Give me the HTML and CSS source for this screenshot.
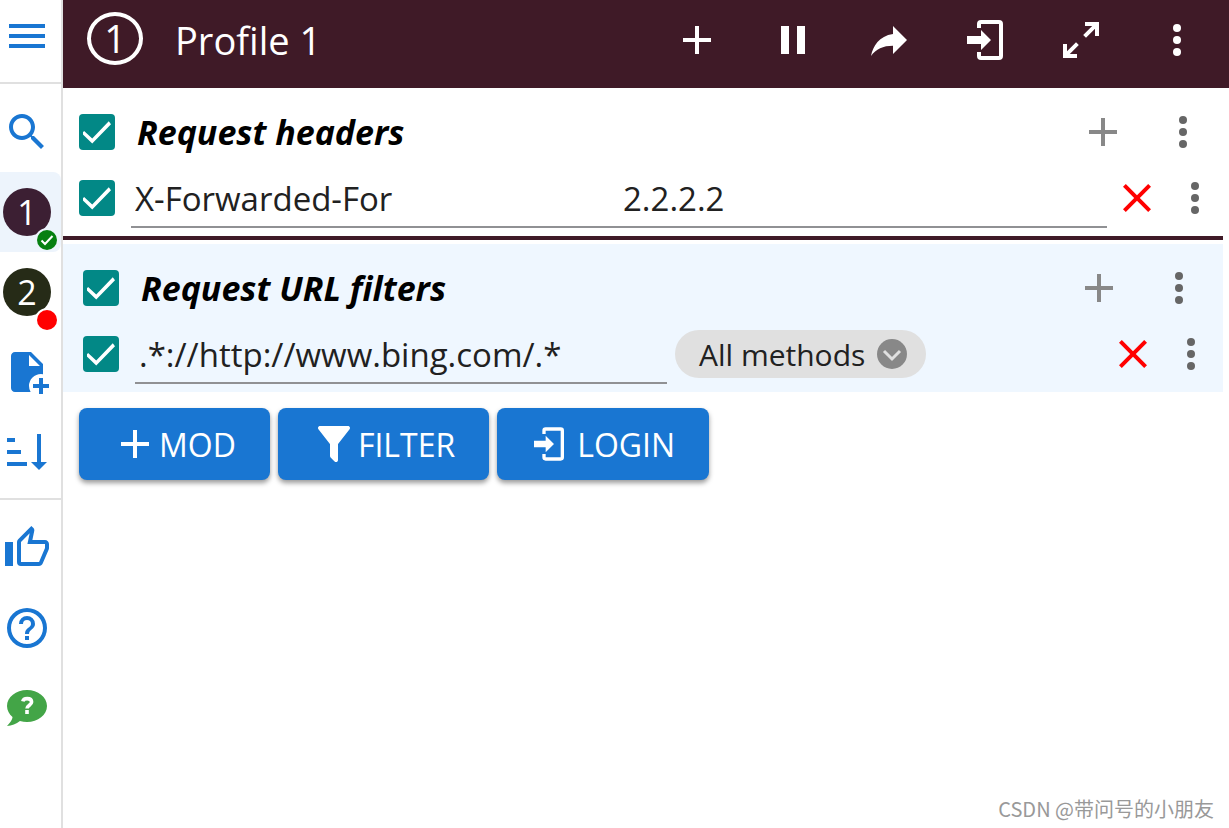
FILE: index.html
```html
<!DOCTYPE html>
<html lang="en">
<head>
<meta charset="utf-8">
<title>Profile 1</title>
<link rel="stylesheet" href="styles.css">
</head>
<body>
<svg class="sprite" aria-hidden="true">
  <symbol id="plus" viewBox="0 0 24 24"><path d="M19 13h-6v6h-2v-6H5v-2h6V5h2v6h6z"/></symbol>
  <symbol id="dots" viewBox="0 0 24 24"><circle cx="12" cy="6" r="2"/><circle cx="12" cy="12" r="2"/><circle cx="12" cy="18" r="2"/></symbol>
  <symbol id="close" viewBox="0 0 24 24"><path d="M19 6.41 17.59 5 12 10.59 6.41 5 5 6.41 10.59 12 5 17.59 6.41 19 12 13.41 17.59 19 19 17.59 13.41 12z"/></symbol>
  <symbol id="login" viewBox="0 0 24 24"><path d="M10 17V14H3V10H10V7L15 12L10 17M10 2H19A2 2 0 0 1 21 4V20A2 2 0 0 1 19 22H10A2 2 0 0 1 8 20V18H10V20H19V4H10V6H8V4A2 2 0 0 1 10 2Z"/></symbol>
</svg>
<div class="app">
  <nav class="sidebar">
    <div class="group group-top">
      <button class="item" aria-label="Menu"><svg class="icon" viewBox="0 0 24 24"><path d="M3 6h18v2H3zM3 11h18v2H3zM3 16h18v2H3z"/></svg></button>
    </div>
    <div class="group">
      <button class="item" aria-label="Search"><svg class="icon" viewBox="0 0 24 24"><path d="M15.5 14h-.79l-.28-.27C15.41 12.59 16 11.11 16 9.5 16 5.91 13.09 3 9.5 3S3 5.91 3 9.5 5.91 16 9.5 16c1.61 0 3.09-.59 4.23-1.57l.27.28v.79l5 4.99L20.49 19l-4.99-5zm-6 0C7.01 14 5 11.99 5 9.5S7.01 5 9.5 5 14 7.01 14 9.5 11.99 14 9.5 14z"/></svg></button>
      <button class="item selected"><span class="avatar plum">1<span class="badge on"><svg viewBox="0 0 20 20"><path d="M4.500 10.500l3.500 3.500 7.500-8" fill="none" stroke="#fff" stroke-width="2"/></svg></span></span></button>
      <button class="item"><span class="avatar olive">2<span class="badge off"></span></span></button>
      <button class="item" aria-label="Add profile"><svg class="icon" viewBox="0 0 24 24"><path fill-rule="evenodd" d="M6 2C4.89 2 4 2.9 4 4V20C4 21.1 4.89 22 6 22H13.81A6 6 0 0 1 13 19A6 6 0 0 1 19 13A6 6 0 0 1 20 13.09V8L14 2H6M13 3.500L18.500 9H13V3.500M18 15V18H15V20H18V23H20V20H23V18H20V15H18Z"/></svg></button>
      <button class="item" aria-label="Sort profiles"><svg class="icon" viewBox="0 0 24 24"><path d="M19 3V17H22L18 21L14 17H17V3M2 17H12V19H2M6 5V7H2V5M2 11H9V13H2V11Z"/></svg></button>
    </div>
    <div class="group group-last">
      <button class="item" aria-label="Like"><svg class="icon" viewBox="0 0 24 24"><path d="M5 9V21H1V9H5M9 21A2 2 0 0 1 7 19V9C7 8.450 7.220 7.950 7.590 7.590L14.170 1L15.230 2.060C15.500 2.330 15.670 2.700 15.670 3.110L15.640 3.430L14.690 8H21C22.110 8 23 8.900 23 10V12C23 12.260 22.950 12.500 22.860 12.730L19.840 19.780C19.540 20.500 18.830 21 18 21H9M9 19H18.030L21 12V10H12.210L13.340 4.680L9 9.030V19Z"/></svg></button>
      <button class="item" aria-label="Help"><svg class="icon" viewBox="0 0 24 24"><path d="M11 18H13V16H11V18M12 2A10 10 0 0 0 2 12A10 10 0 0 0 12 22A10 10 0 0 0 22 12A10 10 0 0 0 12 2M12 20C7.590 20 4 16.410 4 12S7.590 4 12 4S20 7.590 20 12S16.410 20 12 20M12 6A4 4 0 0 0 8 10H10A2 2 0 0 1 12 8A2 2 0 0 1 14 10C14 12 11 11.750 11 15H13C13 12.750 16 12.500 16 10A4 4 0 0 0 12 6Z"/></svg></button>
      <button class="item" aria-label="Support"><svg class="icon green" viewBox="0 0 24 24"><path d="M12 3C6.500 3 2 6.580 2 11C2.050 13.150 3.060 15.170 4.750 16.500C4.750 17.100 4.330 18.670 2 21C4.370 20.890 6.640 20 8.470 18.500C9.610 18.830 10.810 19 12 19C17.500 19 22 15.420 22 11S17.500 3 12 3Z"/><path d="M9.900 8.700C10.100 7.700 11 7.300 12.100 7.300C13.500 7.300 14.300 8 14.300 9C14.300 10.600 12 10.600 12 12.300M12 13v2" fill="none" stroke="#fff" stroke-width="1.800"/></svg></button>
    </div>
  </nav>

  <div class="main">
    <header class="topbar">
      <span class="ring">1</span>
      <h1 class="title">Profile 1</h1>
      <button class="tool" aria-label="Add"><svg class="icon"><use href="#plus"/></svg></button>
      <button class="tool" aria-label="Pause"><svg class="icon" viewBox="0 0 24 24"><path d="M6 19h4V5H6zM14 5v14h4V5z"/></svg></button>
      <button class="tool" aria-label="Share"><svg class="icon" viewBox="0 0 24 24"><path d="M21 12L14 5V9C7 10 4 15 3 20C5.500 16.500 9 14.900 14 14.900V19L21 12Z"/></svg></button>
      <button class="tool" aria-label="Log in"><svg class="icon"><use href="#login"/></svg></button>
      <button class="tool" aria-label="Expand"><svg class="icon" viewBox="0 0 24 24"><path d="M10 21V19H6.410L10.910 14.500L9.500 13.090L5 17.590V14H3V21H10M14.500 10.910L19 6.410V10H21V3H14V5H17.590L13.090 9.500L14.500 10.910Z"/></svg></button>
      <button class="tool" aria-label="More"><svg class="icon"><use href="#dots"/></svg></button>
    </header>

    <section class="panel headers">
      <div class="row head">
        <input class="check" type="checkbox" id="rh" checked>
        <label class="heading" for="rh">Request headers</label>
        <button class="act add" aria-label="Add header"><svg class="icon"><use href="#plus"/></svg></button>
        <button class="act more" aria-label="Header options"><svg class="icon"><use href="#dots"/></svg></button>
      </div>
      <div class="row">
        <input class="check" type="checkbox" aria-label="Enable header" checked>
        <div class="fields">
          <input class="field" type="text" aria-label="Name" value="X-Forwarded-For">
          <input class="field" type="text" aria-label="Value" value="2.2.2.2">
        </div>
        <button class="act remove" aria-label="Remove header"><svg class="icon"><use href="#close"/></svg></button>
        <button class="act more" aria-label="Header row options"><svg class="icon"><use href="#dots"/></svg></button>
      </div>
    </section>

    <section class="panel filters">
      <div class="row head">
        <input class="check" type="checkbox" id="rf" checked>
        <label class="heading" for="rf">Request URL filters</label>
        <button class="act add" aria-label="Add filter"><svg class="icon"><use href="#plus"/></svg></button>
        <button class="act more" aria-label="Filter options"><svg class="icon"><use href="#dots"/></svg></button>
      </div>
      <div class="row">
        <input class="check" type="checkbox" aria-label="Enable filter" checked>
        <div class="fields">
          <input class="field" type="text" aria-label="URL pattern" value=".*://http://www.bing.com/.*">
        </div>
        <div class="chip-area">
          <button class="chip">All methods<svg class="chip-icon" viewBox="0 0 30 30"><circle cx="15" cy="15" r="15"/><path d="M7 12l8 8 8-8" fill="none" stroke="#e0e0e0" stroke-width="3"/></svg></button>
        </div>
        <button class="act remove" aria-label="Remove filter"><svg class="icon"><use href="#close"/></svg></button>
        <button class="act more" aria-label="Filter row options"><svg class="icon"><use href="#dots"/></svg></button>
      </div>
    </section>

    <div class="actions">
      <button class="btn"><svg class="icon"><use href="#plus"/></svg>MOD</button>
      <button class="btn"><svg class="icon" viewBox="0 0 24 24"><path d="M14 12V19.880C14.040 20.180 13.940 20.500 13.710 20.710C13.320 21.100 12.690 21.100 12.300 20.710L10.290 18.700C10.060 18.470 9.960 18.160 10 17.870V12H9.970L4.210 4.620C3.870 4.190 3.950 3.560 4.380 3.220C4.570 3.080 4.780 3 5 3H19C19.220 3 19.430 3.080 19.620 3.220C20.050 3.560 20.130 4.190 19.790 4.620L14.030 12H14Z"/></svg>FILTER</button>
      <button class="btn"><svg class="icon small"><use href="#login"/></svg>LOGIN</button>
    </div>
    <footer class="credit">CSDN @带问号的小朋友</footer>
  </div>
</div>
</body>
</html>
```

FILE: styles.css
```css
* { box-sizing: border-box; }
body {
  margin: 0;
  background: #fff;
  color: #212121;
  font-family: "Open Sans", "Noto Sans", "Noto Sans CJK SC", sans-serif;
}
button, input { font: inherit; color: inherit; }
button {
  display: flex;
  align-items: center;
  padding: 0;
  border: 0;
  background: none;
  cursor: pointer;
}
.sprite { display: none; }
.icon { width: 48px; height: 48px; flex: none; fill: currentColor; }
.app { display: flex; min-height: 100vh; }

.sidebar {
  flex: none;
  width: 63px;
  border-right: 2px solid #e0e0e0;
  color: #1976d2;
}
.group { padding: 8px 0 6px; border-bottom: 2px solid #e0e0e0; }
.group-top { padding: 0 0 10px; }
.group-top .item { height: 72px; }
.group-last { border-bottom: 0; }
.item { width: 100%; height: 80px; padding-left: 3px; }
.selected { background: #edf4fc; border-radius: 0 8px 8px 0; }
.avatar {
  position: relative;
  display: flex;
  align-items: center;
  justify-content: center;
  width: 48px;
  height: 48px;
  border-radius: 50%;
  color: #fff;
  font-size: 34px;
  line-height: 48px;
}
.plum { background: #3c1f33; }
.olive { background: #262b17; }
.badge {
  position: absolute;
  right: -6px;
  bottom: -14px;
  width: 20px;
  height: 20px;
  border-radius: 50%;
}
.badge svg { display: block; }
.on { background: #078011; box-shadow: 0 0 0 2px #edf4fc; }
.off { background: #f00; box-shadow: 0 0 0 2px #fff; }
.green { color: #43a547; }

.main { flex: 1; min-width: 0; display: flex; flex-direction: column; }
.topbar {
  display: flex;
  align-items: center;
  height: 88px;
  padding: 0 4px 8px 24px;
  background: #3f1a27;
  color: #fff;
}
.ring {
  display: flex;
  align-items: center;
  justify-content: center;
  width: 56px;
  height: 53px;
  margin-bottom: 4px;
  border: 4px solid #fff;
  border-radius: 50%;
  font-size: 38px;
  line-height: 44px;
}
.title { flex: 1; margin: 0 0 0 32px; font-size: 38px; font-weight: 400; }
.tool { width: 96px; justify-content: center; }

.panel { margin-right: 6px; }
.headers { padding: 8px 4px 8px 16px; border-bottom: 4px solid #3f1a27; }
.filters { margin-top: 4px; padding: 8px 8px 8px 20px; background: #eff7ff; }
.row { display: flex; align-items: center; height: 60px; }
.row.head { height: 72px; }
.check {
  appearance: none;
  flex: none;
  width: 36px;
  height: 36px;
  margin: 0;
  border-radius: 4px;
  background: #028886;
  display: grid;
  place-items: center;
}
.check::before {
  content: "";
  width: 28px;
  height: 28px;
  background: #fff;
  clip-path: polygon(4% 46%, 33% 73%, 92% 12%, 100% 22%, 33% 91%, -4% 55%);
}
.heading {
  flex: 1;
  margin-left: 22px;
  color: #000;
  font-size: 34px;
  font-weight: 700;
  font-style: italic;
}
.fields {
  flex: 1;
  display: flex;
  align-self: stretch;
  min-width: 0;
  margin-left: 16px;
  border-bottom: 2px solid #909194;
}
.field {
  flex: 1;
  min-width: 0;
  padding: 3px 4px 0;
  border: 0;
  outline: 0;
  background: none;
  font-size: 33px;
}
.act { flex: none; justify-content: center; color: #666; }
.act.add { width: 80px; color: #888; }
.act.more { width: 48px; }
.head .act.more { width: 80px; margin-right: -4px; }
.act.remove { width: 60px; margin-right: 4px; color: #f00; }
.chip-area { flex: 0 0 428px; margin-left: 8px; }
.chip {
  gap: 12px;
  height: 48px;
  padding: 0 19px 0 24px;
  border-radius: 24px;
  background: #e0e0e0;
  font-size: 30px;
}
.chip-icon { width: 30px; height: 30px; fill: #888; }

.actions { display: flex; flex-wrap: wrap; gap: 8px; padding: 16px; }
.btn {
  height: 72px;
  padding: 0 34px 0 32px;
  border-radius: 8px;
  background: #1976d2;
  box-shadow: 0 3px 5px rgba(0, 0, 0, .4);
  color: #fff;
  font-size: 32px;
}
.small { width: 40px; height: 40px; margin-right: 8px; }
.credit {
  margin-top: auto;
  padding: 0 15px 4px;
  color: #999;
  font-family: "Noto Sans CJK SC", sans-serif;
  font-size: 20px;
  line-height: 30px;
  text-align: right;
}
```
